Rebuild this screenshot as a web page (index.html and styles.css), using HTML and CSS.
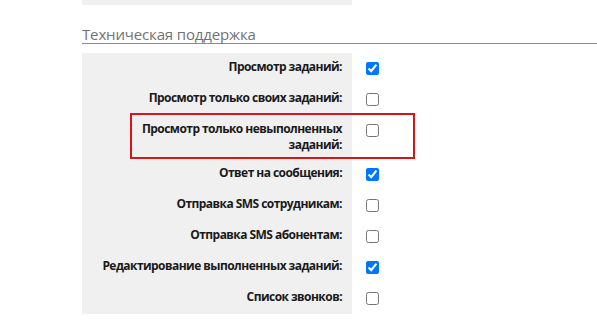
FILE: index.html
```html
<!DOCTYPE html>
<html lang="ru">
<head>
    <meta charset="UTF-8">
    <title>Права доступа</title>
    <link rel="stylesheet" href="styles.css">
</head>
<body>

    <div class="page">
        <!-- хвост предыдущего блока -->
        <div class="prev-table"></div>

        <h3 class="group-title">Техническая поддержка</h3>

        <table class="rights">
            <tr>
                <td class="label">Просмотр заданий:</td>
                <td class="check"><input type="checkbox" checked></td>
            </tr>
            <tr>
                <td class="label">Просмотр только своих заданий:</td>
                <td class="check"><input type="checkbox"></td>
            </tr>
            <tr class="marked">
                <td class="label">Просмотр только невыполненных<br>заданий:</td>
                <td class="check"><input type="checkbox"></td>
            </tr>
            <tr>
                <td class="label">Ответ на сообщения:</td>
                <td class="check"><input type="checkbox" checked></td>
            </tr>
            <tr>
                <td class="label">Отправка SMS сотрудникам:</td>
                <td class="check"><input type="checkbox"></td>
            </tr>
            <tr>
                <td class="label">Отправка SMS абонентам:</td>
                <td class="check"><input type="checkbox"></td>
            </tr>
            <tr>
                <td class="label">Редактирование выполненных заданий:</td>
                <td class="check"><input type="checkbox" checked></td>
            </tr>
            <tr>
                <td class="label">Список звонков:</td>
                <td class="check"><input type="checkbox"></td>
            </tr>
        </table>

        <!-- рамка-выделение -->
        <div class="highlight"></div>
    </div>

</body>
</html>
```

FILE: styles.css
```css
body {
    margin: 0;
    padding: 0;
    background: #fff;
    font-family: "Open Sans", "Liberation Sans", sans-serif;
}
.page {
    position: relative;
    padding-left: 82px;
}
.prev-table {
    width: 270px;
    height: 5px;
    background-color: #f0f0f0;
}
.group-title {
    margin: 20px 0 0;
    font-size: 15px;
    line-height: 18px;
    font-weight: normal;
    letter-spacing: -0.15px;
    color: #727272;
    border-bottom: 1px solid #8c8c8c;
}
.rights {
    margin-top: 9px;
    border-collapse: collapse;
}
.rights td {
    padding: 0;
    vertical-align: top;
}
.rights .label {
    width: 250px;
    height: 19px;
    padding: 6px 10px;
    background-color: #f0f0f0;
    text-align: right;
    font-size: 12px;
    line-height: 16px;
    font-weight: 700;
    letter-spacing: -0.55px;
    color: #1a1a1a;
    white-space: nowrap;
}
.rights .check {
    padding: 9px 0 0 14px;
}
.rights input {
    display: block;
    width: 13px;
    height: 13px;
    margin: 0;
}
.highlight {
    position: absolute;
    left: 130px;
    top: 113px;
    width: 285px;
    height: 46px;
    box-sizing: border-box;
    border: 2px solid #d7141c;
}
```
